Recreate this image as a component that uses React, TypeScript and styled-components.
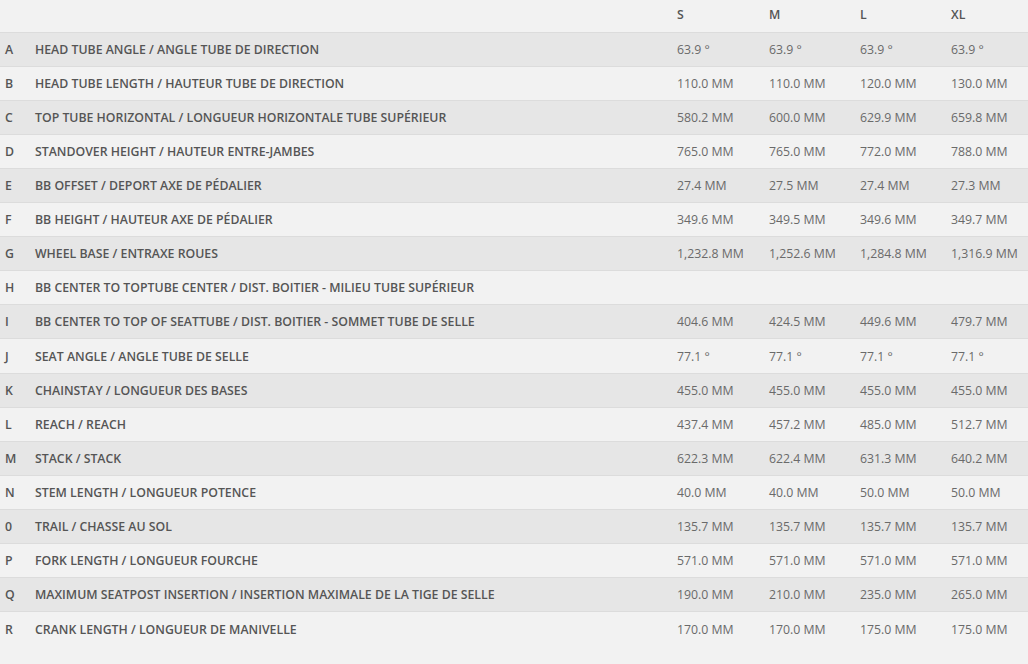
import styled, { createGlobalStyle } from "styled-components";

const GlobalStyle = createGlobalStyle`
  html, body {
    margin: 0;
    padding: 0;
    background: #f2f2f2;
  }
  body {
    font-family: "Open Sans", "Liberation Sans", sans-serif;
  }
`;

const SIZES: [string, number][] = [
  ["S", 92],
  ["M", 91],
  ["L", 91],
  ["XL", 77],
];

const ROWS: [string, string, string[]][] = [
  ["A", "Head Tube Angle / Angle tube de direction", ["63.9 °", "63.9 °", "63.9 °", "63.9 °"]],
  ["B", "Head Tube Length / Hauteur tube de direction", ["110.0 MM", "110.0 MM", "120.0 MM", "130.0 MM"]],
  ["C", "Top Tube Horizontal / Longueur horizontale tube supérieur", ["580.2 MM", "600.0 MM", "629.9 MM", "659.8 MM"]],
  ["D", "Standover Height / Hauteur entre-jambes", ["765.0 MM", "765.0 MM", "772.0 MM", "788.0 MM"]],
  ["E", "BB Offset / Deport axe de pédalier", ["27.4 MM", "27.5 MM", "27.4 MM", "27.3 MM"]],
  ["F", "BB Height / Hauteur axe de pédalier", ["349.6 MM", "349.5 MM", "349.6 MM", "349.7 MM"]],
  ["G", "Wheel Base / Entraxe roues", ["1,232.8 MM", "1,252.6 MM", "1,284.8 MM", "1,316.9 MM"]],
  ["H", "BB Center to Toptube Center / Dist. boitier - milieu tube supérieur", ["", "", "", ""]],
  ["I", "BB Center to Top of Seattube / Dist. boitier - sommet tube de selle", ["404.6 MM", "424.5 MM", "449.6 MM", "479.7 MM"]],
  ["J", "Seat Angle / Angle tube de selle", ["77.1 °", "77.1 °", "77.1 °", "77.1 °"]],
  ["K", "Chainstay / Longueur des bases", ["455.0 MM", "455.0 MM", "455.0 MM", "455.0 MM"]],
  ["L", "Reach / Reach", ["437.4 MM", "457.2 MM", "485.0 MM", "512.7 MM"]],
  ["M", "Stack / Stack", ["622.3 MM", "622.4 MM", "631.3 MM", "640.2 MM"]],
  ["N", "Stem Length / Longueur potence", ["40.0 MM", "40.0 MM", "50.0 MM", "50.0 MM"]],
  ["0", "Trail / Chasse au sol", ["135.7 MM", "135.7 MM", "135.7 MM", "135.7 MM"]],
  ["P", "Fork Length / Longueur fourche", ["571.0 MM", "571.0 MM", "571.0 MM", "571.0 MM"]],
  ["Q", "Maximum Seatpost Insertion / Insertion maximale de la tige de selle", ["190.0 MM", "210.0 MM", "235.0 MM", "265.0 MM"]],
  ["R", "Crank Length / Longueur de manivelle", ["170.0 MM", "170.0 MM", "175.0 MM", "175.0 MM"]],
];

const App = () => {
  return (
    <>
      <GlobalStyle />
      <GeometryTable>
        <thead>
          <tr>
            <HeadCell $width={35} />
            <HeadCell />
            {SIZES.map(([size, width]) => (
              <HeadCell key={size} $width={width}>
                {size}
              </HeadCell>
            ))}
          </tr>
        </thead>
        <tbody>
          {ROWS.map(([letter, label, values], i) => (
            <Row key={letter + i} $striped={i % 2 === 0}>
              <Letter>{letter}</Letter>
              <Label>{label}</Label>
              {values.map((value, j) => (
                <Value key={j}>{value}</Value>
              ))}
            </Row>
          ))}
        </tbody>
      </GeometryTable>
    </>
  );
};

const GeometryTable = styled.table`
  width: 1028px;
  table-layout: fixed;
  border-collapse: collapse;
  border-spacing: 0;
`;

const HeadCell = styled.th<{ $width?: number }>`
  width: ${(props) => (props.$width ? `${props.$width}px` : "auto")};
  height: 32px;
  padding: 0 0 2px 0;
  box-sizing: border-box;
  text-align: left;
  vertical-align: middle;
  font-size: 12.3px;
  font-weight: 600;
  color: #555555;
`;

const Row = styled.tr<{ $striped?: boolean }>`
  height: 34.12px;
  background: ${(props) => (props.$striped ? "#e6e6e6" : "#f2f2f2")};
  border-top: 1px solid #dcdcdc;
`;

const Letter = styled.td`
  padding: 0 0 0 5px;
  font-size: 12.3px;
  font-weight: 600;
  color: #555555;
`;

const Label = styled.td`
  padding: 0;
  font-size: 12.3px;
  font-weight: 600;
  color: #555555;
  text-transform: uppercase;
  white-space: nowrap;
`;

const Value = styled.td`
  padding: 0;
  font-size: 12.3px;
  font-weight: 400;
  color: #6a6a6a;
  white-space: nowrap;
`;

export default App;
